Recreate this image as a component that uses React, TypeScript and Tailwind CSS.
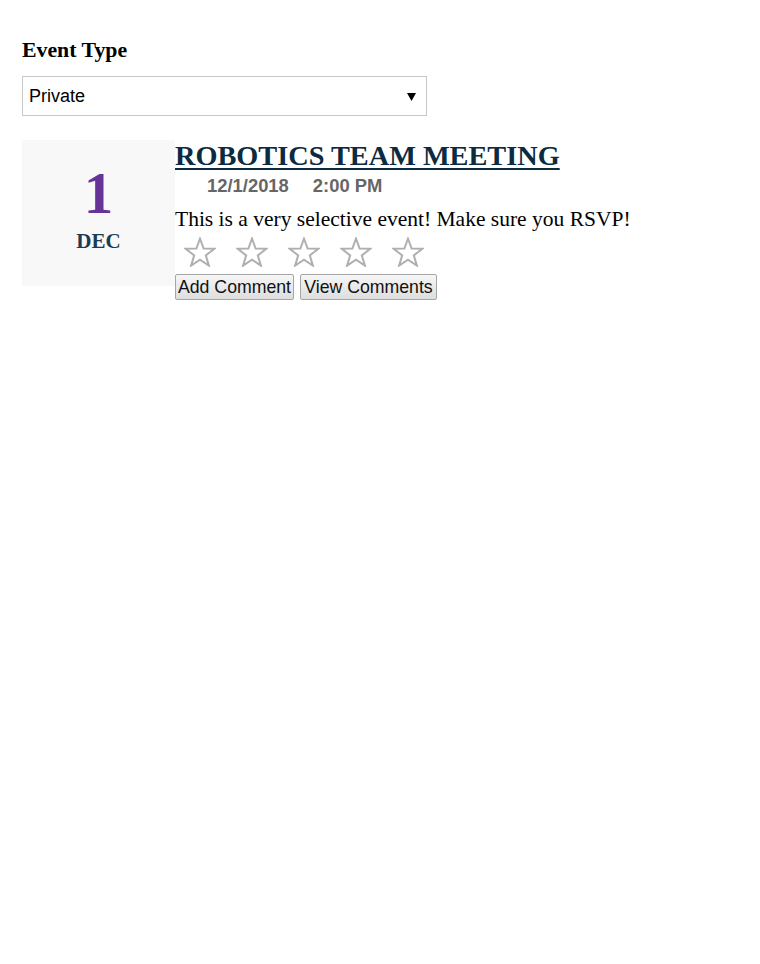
import React from "react";

const Star = () => (
  <svg width="32" height="30" viewBox="0 0 32 30" className="block">
    <polygon
      points="16,1.5 19.6,11.6 30.4,11.8 21.8,18.4 24.9,28.6 16,22.6 7.1,28.6 10.2,18.4 1.6,11.8 12.4,11.6"
      fill="none"
      stroke="#b0b0b0"
      strokeWidth="2"
      strokeLinejoin="miter"
    />
  </svg>
);

export default function App() {
  return (
    <div className="min-h-[964px] w-[760px] bg-white pl-[22px] pt-[37px]">
      <h3 className="text-[21.8px] leading-[26px] font-bold text-black [font-family:'Liberation_Serif',serif]">
        Event Type
      </h3>
      <div className="mt-[13px] flex h-[40px] w-[405px] items-center justify-between border border-[#c8c8c8] pl-[6px] pr-[10px] text-[18px] text-black [font-family:'Liberation_Sans',Arial,sans-serif]">
        <span>Private</span>
        <svg width="9" height="9" viewBox="0 0 9 9">
          <polygon points="0,1 9,1 4.5,9" fill="#000" />
        </svg>
      </div>

      <div className="mt-[24px] flex">
        <div className="flex h-[146px] w-[153px] shrink-0 flex-col items-center bg-[#f8f8f8] [font-family:'Liberation_Serif',serif]">
          <div className="mt-[20px] text-[59px] leading-[66px] font-bold text-[#663399]">1</div>
          <div className="mt-[3px] text-[21px] leading-[24px] font-bold text-[#1c3a55]">DEC</div>
        </div>
        <div className="flex flex-col">
          <div className="text-[28.3px] leading-[32px] font-bold text-[#0c2a40] underline decoration-[2px] underline-offset-[3px] [font-family:'Liberation_Serif',serif]">
            ROBOTICS TEAM MEETING
          </div>
          <div className="mt-[3px] ml-[32px] flex gap-[24px] text-[18.4px] leading-[22px] font-bold text-[#666666] [font-family:'Liberation_Sans',Arial,sans-serif]">
            <span>12/1/2018</span>
            <span>2:00 PM</span>
          </div>
          <p className="mt-[9px] text-[21.5px] leading-[26px] text-black [font-family:'Liberation_Serif',serif]">
            This is a very selective event! Make sure you RSVP!
          </p>
          <div className="mt-[5px] ml-[9px] flex gap-[20px]">
            <Star />
            <Star />
            <Star />
            <Star />
            <Star />
          </div>
          <div className="mt-[7px] flex gap-[6px] [font-family:'Liberation_Sans',Arial,sans-serif]">
            <button className="h-[26px] w-[119px] rounded-[2px] border border-[#a6a6a6] bg-gradient-to-b from-[#f6f6f6] to-[#dedede] text-[17.7px] leading-[24px] text-[#111]">
              Add Comment
            </button>
            <button className="h-[26px] w-[137px] rounded-[2px] border border-[#a6a6a6] bg-gradient-to-b from-[#f6f6f6] to-[#dedede] text-[17.7px] leading-[24px] text-[#111]">
              View Comments
            </button>
          </div>
        </div>
      </div>
    </div>
  );
}
